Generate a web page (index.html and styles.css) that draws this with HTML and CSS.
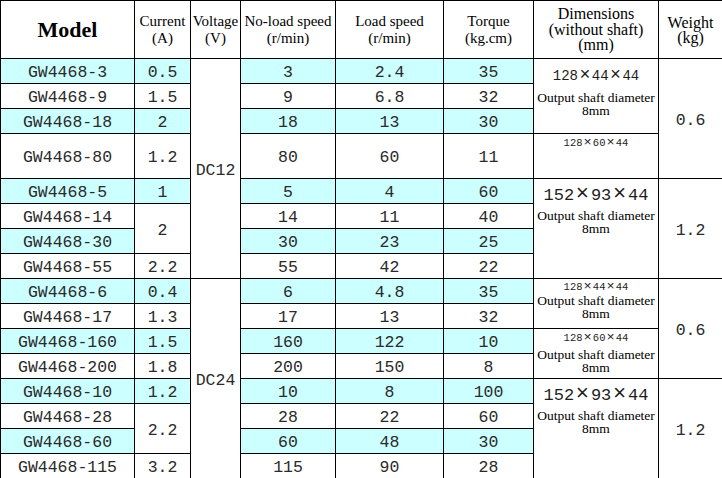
FILE: index.html
```html
<!DOCTYPE html>
<html>
<head>
<meta charset="utf-8">
<link rel="stylesheet" href="styles.css">
</head>
<body>
<table class="spec">
  <colgroup>
    <col class="c-model"><col class="c-cur"><col class="c-volt"><col class="c-nol"><col class="c-load"><col class="c-torq"><col class="c-dim"><col class="c-wt">
  </colgroup>
  <thead>
    <tr class="head">
      <th class="h-model">Model</th>
      <th class="h-sm">Current<br>(A)</th>
      <th class="h-sm">Voltage<br>(V)</th>
      <th class="h-sm">No-load speed<br>(r/min)</th>
      <th class="h-sm">Load speed<br>(r/min)</th>
      <th class="h-sm">Torque<br>(kg.cm)</th>
      <th class="h-dim">Dimensions<br>(without shaft)<br>(mm)</th>
      <th class="h-wt">Weight<br>(kg)</th>
    </tr>
  </thead>
  <tbody>
    <tr>
      <td class="cy">GW4468-3</td><td class="cy">0.5</td>
      <td class="volt" rowspan="8">DC12</td>
      <td class="cy">3</td><td class="cy">2.4</td><td class="cy">35</td>
      <td class="dim dim-a" rowspan="3"><div class="dn dn-md">128<span class="x">×</span>44<span class="x">×</span>44</div><div class="ds ds-a">Output shaft diameter</div><div class="ds">8mm</div></td>
      <td class="wt" rowspan="4">0.6</td>
    </tr>
    <tr><td>GW4468-9</td><td>1.5</td><td>9</td><td>6.8</td><td>32</td></tr>
    <tr><td class="cy">GW4468-18</td><td class="cy">2</td><td class="cy">18</td><td class="cy">13</td><td class="cy">30</td></tr>
    <tr class="tall">
      <td>GW4468-80</td><td>1.2</td><td>80</td><td>60</td><td>11</td>
      <td class="dim dim-top"><div class="dn dn-sm">128<span class="x">×</span>60<span class="x">×</span>44</div></td>
    </tr>

    <tr>
      <td class="cy">GW4468-5</td><td class="cy">1</td>
      <td class="cy">5</td><td class="cy">4</td><td class="cy">60</td>
      <td class="dim dim-big" rowspan="4"><div class="dn dn-lg">152<span class="x">×</span>93<span class="x">×</span>44</div><div class="ds ds-b">Output shaft diameter</div><div class="ds">8mm</div></td>
      <td class="wt" rowspan="4">1.2</td>
    </tr>
    <tr><td>GW4468-14</td><td rowspan="2">2</td><td>14</td><td>11</td><td>40</td></tr>
    <tr><td class="cy">GW4468-30</td><td class="cy">30</td><td class="cy">23</td><td class="cy">25</td></tr>
    <tr><td>GW4468-55</td><td>2.2</td><td>55</td><td>42</td><td>22</td></tr>

    <tr>
      <td class="cy">GW4468-6</td><td class="cy">0.4</td>
      <td class="volt" rowspan="8">DC24</td>
      <td class="cy">6</td><td class="cy">4.8</td><td class="cy">35</td>
      <td class="dim dim-pair" rowspan="2"><div class="dn dn-sm">128<span class="x">×</span>44<span class="x">×</span>44</div><div class="ds ds-c">Output shaft diameter</div><div class="ds">8mm</div></td>
      <td class="wt" rowspan="4">0.6</td>
    </tr>
    <tr><td>GW4468-17</td><td>1.3</td><td>17</td><td>13</td><td>32</td></tr>
    <tr>
      <td class="cy">GW4468-160</td><td class="cy">1.5</td>
      <td class="cy">160</td><td class="cy">122</td><td class="cy">10</td>
      <td class="dim dim-pair2" rowspan="2"><div class="dn dn-sm">128<span class="x">×</span>60<span class="x">×</span>44</div><div class="ds ds-d">Output shaft diameter</div><div class="ds">8mm</div></td>
    </tr>
    <tr><td>GW4468-200</td><td>1.8</td><td>200</td><td>150</td><td>8</td></tr>

    <tr>
      <td class="cy">GW4468-10</td><td class="cy">1.2</td>
      <td class="cy">10</td><td class="cy">8</td><td class="cy">100</td>
      <td class="dim dim-big" rowspan="4"><div class="dn dn-lg">152<span class="x">×</span>93<span class="x">×</span>44</div><div class="ds ds-b">Output shaft diameter</div><div class="ds">8mm</div></td>
      <td class="wt" rowspan="4">1.2</td>
    </tr>
    <tr><td>GW4468-28</td><td rowspan="2">2.2</td><td>28</td><td>22</td><td>60</td></tr>
    <tr><td class="cy">GW4468-60</td><td class="cy">60</td><td class="cy">48</td><td class="cy">30</td></tr>
    <tr><td>GW4468-115</td><td>3.2</td><td>115</td><td>90</td><td>28</td></tr>
  </tbody>
</table>
</body>
</html>
```

FILE: styles.css
```css
html, body {
  margin: 0;
  padding: 0;
  background: #ffffff;
}

.spec {
  border-collapse: collapse;
  table-layout: fixed;
  width: 722px;
  font-family: "Liberation Mono", "DejaVu Sans Mono", monospace;
  font-size: 16.5px;
  color: #2a2a2a;
}

.c-model { width: 134px; }
.c-cur { width: 56px; }
.c-volt { width: 50px; }
.c-nol { width: 95px; }
.c-load { width: 108px; }
.c-torq { width: 90px; }
.c-dim { width: 125px; }
.c-wt { width: 64px; }

.spec th,
.spec td {
  border: 1px solid #000;
  padding: 0;
  text-align: center;
  vertical-align: middle;
  overflow: hidden;
  white-space: nowrap;
}

.spec td {
  height: 25px;
  line-height: 18px;
  padding-top: 4px;
  box-sizing: border-box;
}

.spec tr.tall td {
  height: 45px;
}

.head th {
  height: 57px;
  font-family: "Liberation Serif", "Times New Roman", serif;
  font-weight: normal;
  color: #000;
}

.h-model {
  font-size: 22px;
  font-weight: bold !important;
  padding-top: 2px;
}

.h-sm {
  font-size: 15px;
  line-height: 17px;
  padding-bottom: 3px;
}

.h-dim {
  font-size: 16px;
  line-height: 15.5px;
  padding-bottom: 4px;
}

.h-wt {
  font-size: 16px;
  line-height: 15px;
  padding-bottom: 3px;
}

.cy {
  background: #ccffff;
}

.volt,
.wt {
  background: #fff;
}

.dim {
  background: #fff;
  color: #000;
}

.spec td.dim-a {
  vertical-align: top;
  padding-top: 8px;
}

.spec td.dim-top {
  vertical-align: top;
  padding-top: 3px;
}

.spec td.dim-big {
  vertical-align: top;
  padding-top: 7px;
}

.spec td.dim-pair {
  vertical-align: top;
  padding-top: 2px;
}

.spec td.dim-pair2 {
  vertical-align: top;
  padding-top: 3px;
}

.dn {
  font-family: "Liberation Mono", "DejaVu Sans Mono", monospace;
  color: #1e1e1e;
}

.dn-lg {
  font-size: 17px;
  line-height: 20px;
}

.dn-md {
  font-size: 14px;
  line-height: 18px;
}

.dn-sm {
  font-size: 10.5px;
  line-height: 12px;
}

.x {
  display: inline-block;
  font-size: 1.3em;
  line-height: 0;
  margin: 0 0.08em;
}

.ds {
  font-family: "Liberation Serif", "Times New Roman", serif;
  font-size: 13.5px;
  line-height: 13px;
  color: #000;
}

.ds-a {
  margin-top: 6px;
}

.ds-b {
  margin-top: 3px;
}

.ds-c {
  margin-top: 1px;
}

.ds-d {
  margin-top: 4px;
}
```
